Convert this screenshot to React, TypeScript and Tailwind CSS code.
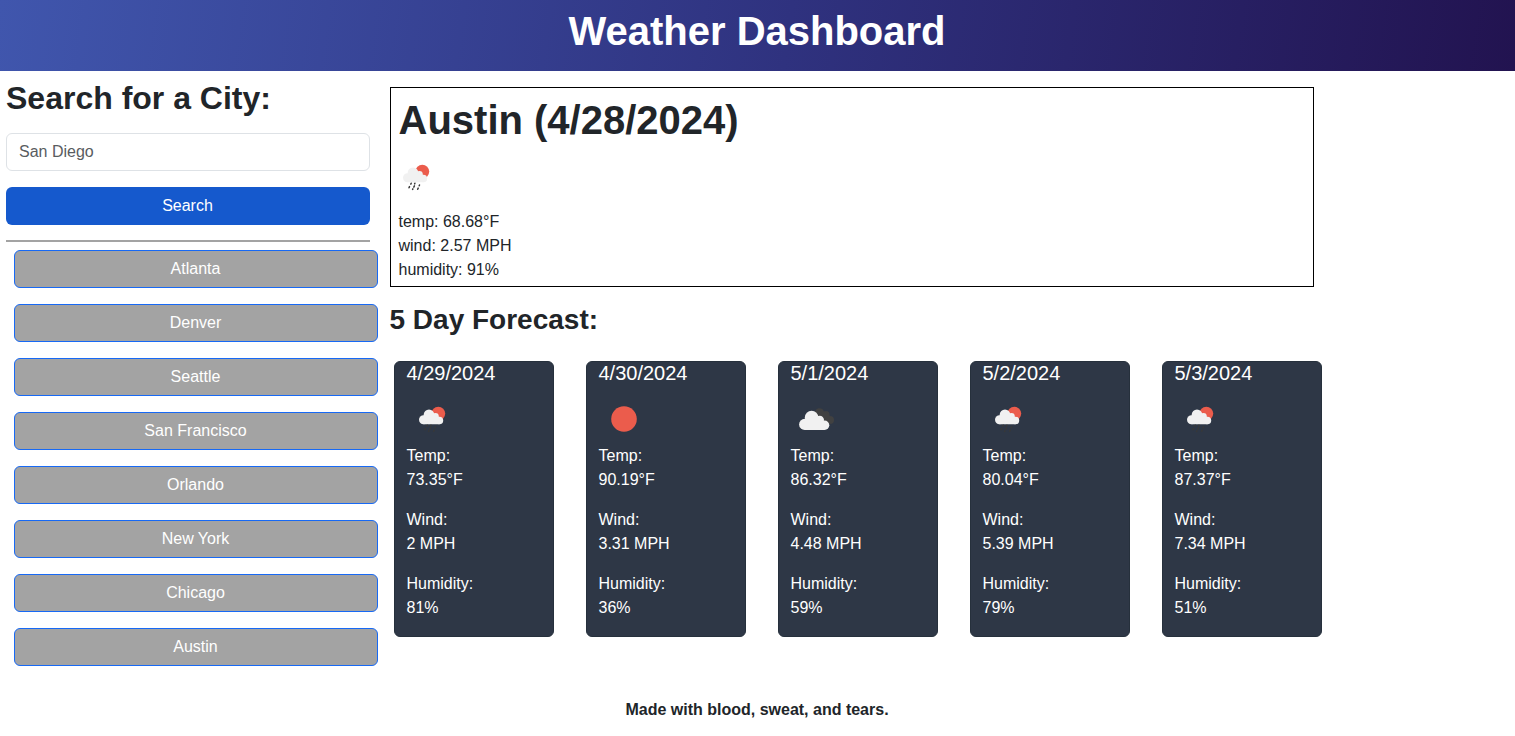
type IconKind = 'rain' | 'sun' | 'clouds';

type Day = {
  date: string;
  icon: IconKind;
  temp: string;
  wind: string;
  humidity: string;
};

const cities = ['Atlanta', 'Denver', 'Seattle', 'San Francisco', 'Orlando', 'New York', 'Chicago', 'Austin'];

const days: Day[] = [
  { date: '4/29/2024', icon: 'rain', temp: '73.35°F', wind: '2 MPH', humidity: '81%' },
  { date: '4/30/2024', icon: 'sun', temp: '90.19°F', wind: '3.31 MPH', humidity: '36%' },
  { date: '5/1/2024', icon: 'clouds', temp: '86.32°F', wind: '4.48 MPH', humidity: '59%' },
  { date: '5/2/2024', icon: 'rain', temp: '80.04°F', wind: '5.39 MPH', humidity: '79%' },
  { date: '5/3/2024', icon: 'rain', temp: '87.37°F', wind: '7.34 MPH', humidity: '51%' },
];

function WeatherIcon({ kind }: { kind: IconKind }) {
  return (
    <svg className="block size-[50px]" viewBox="0 0 50 50">
      {kind === 'sun' && <circle cx="25" cy="25" r="12.8" fill="#eb5c4c" />}
      {kind === 'rain' && (
        <>
          <circle cx="31.300" cy="19.600" r="6.900" fill="#eb5c4c" />
          <g fill="#f1f1f1">
            <circle cx="16.500" cy="25.800" r="4.500" />
            <circle cx="22" cy="20.700" r="5.300" />
            <circle cx="28.400" cy="22.500" r="3.400" />
            <circle cx="32.400" cy="26.500" r="3.800" />
            <path d="M16.500 21.500h12l4 4v4.800h-16z" />
          </g>
          <path
            d="M20.200 31.200l-.4.900M23.900 31.200l-.3.700M28.500 33l-.3.700M18.500 34.600l-.5 1.200M23.400 33.900l-.6 1.200M21.900 36.800l-.3.600M27.200 36.100l-.5 1.100"
            stroke="#393939"
            strokeWidth="1.500"
            strokeLinecap="round"
          />
        </>
      )}
      {kind === 'clouds' && (
        <>
          <g fill="#414141">
            <circle cx="28.500" cy="18.800" r="4.600" />
            <circle cx="35" cy="20.500" r="3.500" />
            <circle cx="39" cy="26" r="4" />
            <path d="M28 18h7l4 4v8H28z" />
          </g>
          <g fill="#f1f1f1">
            <circle cx="13.700" cy="30.400" r="5.600" />
            <circle cx="20.600" cy="23.500" r="6.800" />
            <circle cx="28.700" cy="26" r="4.300" />
            <circle cx="33.600" cy="31.300" r="4.700" />
            <path d="M13.700 25h15l4.900 5v6H13.700z" />
          </g>
        </>
      )}
    </svg>
  );
}

function DayCard({ day }: { day: Day }) {
  return (
    <article className="h-[276px] w-40 rounded-md border border-[#26303c] bg-[#2e3746] px-[11.5px] text-white">
      <h5 className="mb-2.5 text-xl leading-[22px]">{day.date}</h5>
      <div className="pl-[0.5px]">
        <WeatherIcon kind={day.icon} />
      </div>
      <p className="mb-4">
        Temp:
        <br />
        {day.temp}
      </p>
      <p className="mb-4">
        Wind:
        <br />
        {day.wind}
      </p>
      <p>
        Humidity:
        <br />
        {day.humidity}
      </p>
    </article>
  );
}

export default function App() {
  return (
    <div className="flex h-[736px] flex-col overflow-hidden bg-white font-['Liberation_Sans',Arial,sans-serif] text-base leading-6 text-[#212529]">
      <header className="h-[71px] shrink-0 bg-[linear-gradient(98deg,#4056ad_0%,#2f327f_52%,#221350_100%)] pt-[7px] text-center text-white">
        <h1 className="pr-px text-[40px] font-bold leading-[48px]">Weather Dashboard</h1>
      </header>
      <div className="flex">
        <aside className="w-[390px] pl-1.5 pt-2">
          <h2 className="mb-4 text-[32px] font-bold leading-[38px]">Search for a City:</h2>
          <form className="w-[364px]" onSubmit={(e) => e.preventDefault()}>
            <input
              className="mb-4 block h-[38px] w-full rounded-md border border-[#dee2e6] px-3 placeholder:text-[#595c5f] placeholder:opacity-100"
              placeholder="San Diego"
            />
            <button className="block h-[38px] w-full rounded-md bg-[#1559cd] pr-px text-white">Search</button>
          </form>
          <hr className="mb-2 mt-[15px] w-[364px] border-0 border-t-2 border-[#a3a3a3]" />
          <div className="ml-2 flex w-[364px] flex-col gap-4">
            {cities.map((city) => (
              <button key={city} className="h-[38px] rounded-md border border-[#1769f5] bg-[#a3a3a3] pr-px text-white">
                {city}
              </button>
            ))}
          </div>
        </aside>
        <main className="pt-4">
          <section className="h-[200px] w-[924px] border border-black pl-[7.5px] pt-2">
            <h2 className="mb-2 text-[40px] font-bold leading-[48px]">Austin (4/28/2024)</h2>
            <div className="-ml-[7.5px] mb-2">
              <WeatherIcon kind="rain" />
            </div>
            <p>temp: 68.68°F</p>
            <p>wind: 2.57 MPH</p>
            <p>humidity: 91%</p>
          </section>
          <h3 className="-ml-[0.5px] mt-4 text-[28px] font-bold leading-[34px]">5 Day Forecast:</h3>
          <div className="ml-1 mt-6 flex gap-8">
            {days.map((day) => (
              <DayCard key={day.date} day={day} />
            ))}
          </div>
        </main>
      </div>
      <footer className="mt-8 pr-px text-center font-bold">Made with blood, sweat, and tears.</footer>
    </div>
  );
}
